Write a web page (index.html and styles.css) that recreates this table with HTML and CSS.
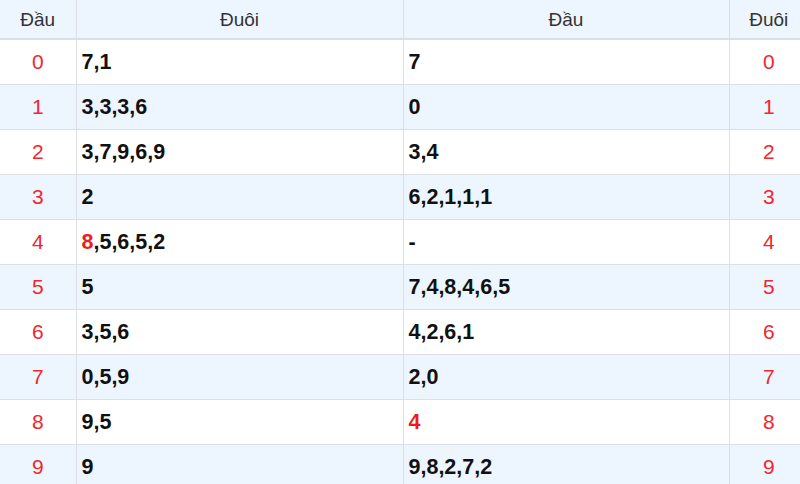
FILE: index.html
```html
<!DOCTYPE html>
<html>
<head>
<meta charset="utf-8">
<link rel="stylesheet" href="styles.css">
</head>
<body>
<table class="lt">
  <colgroup><col class="c1"><col class="c2"><col class="c3"><col class="c4"></colgroup>
  <thead>
    <tr><th>Đầu</th><th>Đuôi</th><th>Đầu</th><th>Đuôi</th></tr>
  </thead>
  <tbody>
    <tr><td class="k">0</td><td class="v">7,1</td><td class="v">7</td><td class="k">0</td></tr>
    <tr><td class="k">1</td><td class="v">3,3,3,6</td><td class="v">0</td><td class="k">1</td></tr>
    <tr><td class="k">2</td><td class="v">3,7,9,6,9</td><td class="v">3,4</td><td class="k">2</td></tr>
    <tr><td class="k">3</td><td class="v">2</td><td class="v">6,2,1,1,1</td><td class="k">3</td></tr>
    <tr><td class="k">4</td><td class="v"><span class="hl">8</span>,5,6,5,2</td><td class="v">-</td><td class="k">4</td></tr>
    <tr><td class="k">5</td><td class="v">5</td><td class="v">7,4,8,4,6,5</td><td class="k">5</td></tr>
    <tr><td class="k">6</td><td class="v">3,5,6</td><td class="v">4,2,6,1</td><td class="k">6</td></tr>
    <tr><td class="k">7</td><td class="v">0,5,9</td><td class="v">2,0</td><td class="k">7</td></tr>
    <tr><td class="k">8</td><td class="v">9,5</td><td class="v"><span class="hl">4</span></td><td class="k">8</td></tr>
    <tr><td class="k">9</td><td class="v">9</td><td class="v">9,8,2,7,2</td><td class="k">9</td></tr>
  </tbody>
</table>
</body>
</html>
```
FILE: styles.css
```css
html, body {
  margin: 0;
  padding: 0;
  overflow: hidden;
  background: #fff;
}
.lt {
  width: 808px;
  border-collapse: collapse;
  table-layout: fixed;
  font-family: "Liberation Sans", Arial, sans-serif;
  font-size: 18px;
  color: #111;
}
.c1 { width: 76px; }
.c2 { width: 327px; }
.c3 { width: 326px; }
.c4 { width: 79px; }
.lt th {
  height: 37px;
  padding: 1px 0 0;
  font-weight: normal;
  font-size: 19px;
  color: #333;
  background: #edf5fe;
  border-left: 1px solid #dcdfe3;
  border-bottom: 2px solid #dcdfe3;
  text-align: center;
}
.lt td {
  height: 44px;
  padding: 0 0 0 5px;
  border-left: 1px solid #dcdfe3;
  border-bottom: 1px solid #dcdfe3;
}
.lt th:first-child, .lt td:first-child { border-left: none; }
.lt tbody tr:nth-child(even) td { background: #edf5fe; }
.lt td.k {
  padding: 0;
  text-align: center;
  font-size: 21px;
  color: #f2262c;
}
.lt td.v {
  font-weight: bold;
  font-size: 21.5px;
  color: #111;
}
.hl { color: #ee1c1c; }
```
